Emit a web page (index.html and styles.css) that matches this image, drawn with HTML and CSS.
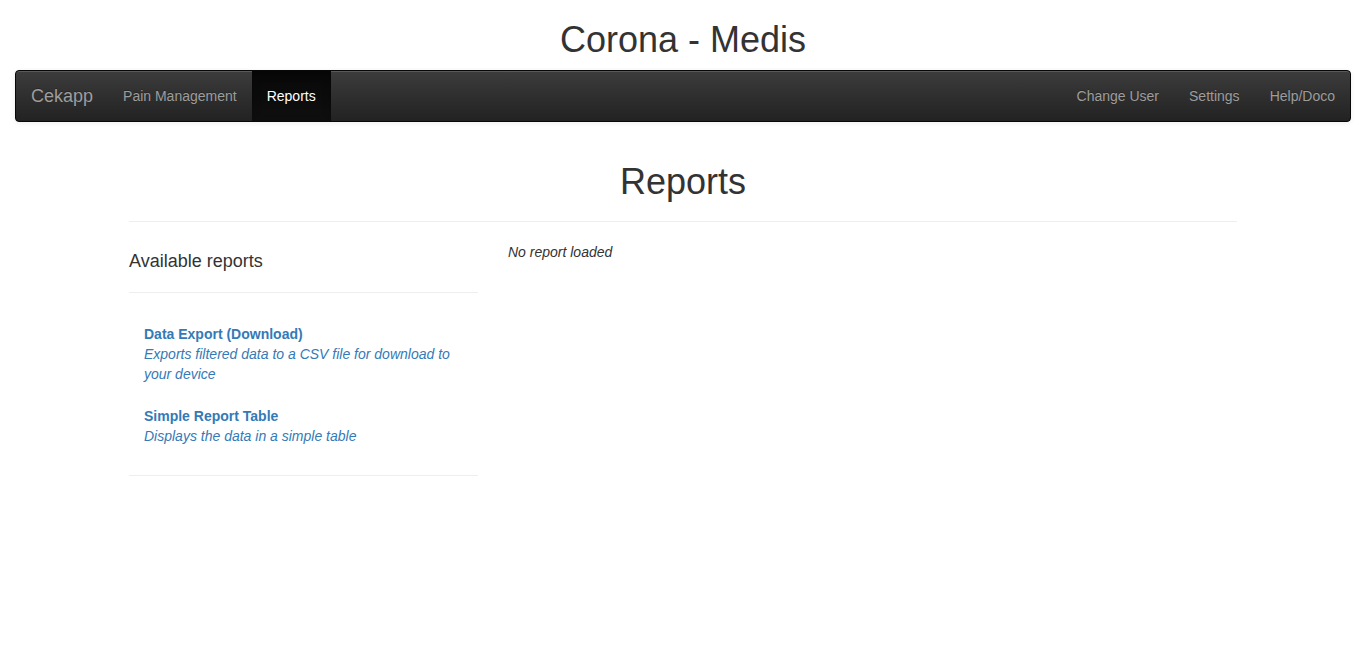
FILE: index.html
```html
<!DOCTYPE html>
<html lang="en">
<head>
<meta charset="utf-8">
<title>Corona - Medis</title>
<link rel="stylesheet" href="styles.css">
</head>
<body>
<div class="page">
  <h1 class="site-title">Corona - Medis</h1>
  <nav class="navbar">
    <div class="nav-left">
      <a class="brand" href="#">Cekapp</a>
      <a class="nav-link" href="#">Pain Management</a>
      <a class="nav-link active" href="#">Reports</a>
    </div>
    <div class="nav-right">
      <a class="nav-link" href="#">Change User</a>
      <a class="nav-link" href="#">Settings</a>
      <a class="nav-link" href="#">Help/Doco</a>
    </div>
  </nav>
  <main class="content">
    <h1 class="page-title">Reports</h1>
    <hr class="rule">
    <div class="columns">
      <aside class="sidebar">
        <h4 class="side-title">Available reports</h4>
        <hr class="rule">
        <div class="list">
          <a class="list-item" href="#">
            <div class="item-heading">Data Export (Download)</div>
            <div class="item-text">Exports filtered data to a CSV file for download to your device</div>
          </a>
          <a class="list-item" href="#">
            <div class="item-heading">Simple Report Table</div>
            <div class="item-text">Displays the data in a simple table</div>
          </a>
        </div>
        <hr class="rule rule-end">
      </aside>
      <section class="report">
        <p class="empty">No report loaded</p>
      </section>
    </div>
  </main>
</div>
</body>
</html>
```

FILE: styles.css
```css
html, body {
  margin: 0;
  padding: 0;
  background: #fff;
}
body {
  font-family: "Liberation Sans", Arial, Helvetica, sans-serif;
  font-size: 14px;
  line-height: 20px;
  color: #333;
}
.page {
  padding: 0 15px;
}
.site-title {
  margin: 20px 0 10px;
  font-size: 36px;
  font-weight: 500;
  line-height: 1.1;
  text-align: center;
  color: #333;
}
.navbar {
  display: flex;
  justify-content: space-between;
  min-height: 50px;
  border: 1px solid #080808;
  border-radius: 4px;
  background-color: #222;
  background-image: linear-gradient(to bottom, #3c3c3c 0, #222 100%);
  box-shadow: inset 0 1px 0 rgba(255,255,255,.15), 0 1px 5px rgba(0,0,0,.075);
  padding: 0 15px;
  margin-bottom: 20px;
}
.nav-left, .nav-right {
  display: flex;
}
.nav-left {
  margin-left: -15px;
}
.nav-right {
  margin-right: -15px;
}
.brand {
  display: block;
  height: 50px;
  box-sizing: border-box;
  padding: 15px;
  font-size: 18px;
  line-height: 20px;
  color: #9d9d9d;
  text-decoration: none;
  text-shadow: 0 -1px 0 rgba(0,0,0,.25);
}
.nav-link {
  display: block;
  padding: 15px;
  line-height: 20px;
  color: #9d9d9d;
  text-decoration: none;
  text-shadow: 0 -1px 0 rgba(0,0,0,.25);
}
.nav-link.active {
  color: #fff;
  background-image: linear-gradient(to bottom, #080808 0, #0f0f0f 100%);
  box-shadow: inset 0 3px 9px rgba(0,0,0,.25);
}
.content {
  width: 1108px;
  margin: 0 auto;
  padding-top: 20px;
}
.page-title {
  margin: 0 0 10px;
  font-size: 36px;
  font-weight: 500;
  line-height: 1.1;
  text-align: center;
}
.rule {
  margin: 20px 0;
  border: 0;
  border-top: 1px solid #eee;
  height: 0;
}
.rule-end {
  margin-top: 18px;
}
.columns {
  display: grid;
  grid-template-columns: 349px 1fr;
  column-gap: 30px;
}
.side-title {
  margin: 10px 0;
  font-size: 18px;
  font-weight: 500;
  line-height: 1.1;
}
.list {
  margin-bottom: 18px;
}
.list-item {
  display: block;
  padding: 11px 15px;
  color: #337ab7;
  text-decoration: none;
}
.item-heading {
  font-weight: bold;
}
.item-text {
  font-style: italic;
}
.report {
  min-width: 0;
}
.empty {
  margin: 0;
  font-style: italic;
}
```
